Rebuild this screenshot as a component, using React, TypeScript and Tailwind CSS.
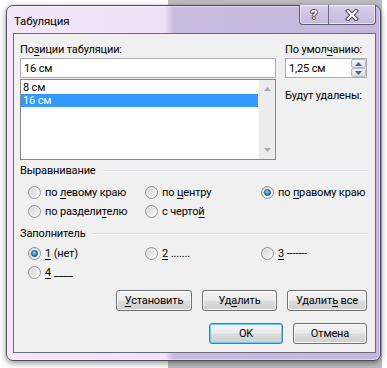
import React from "react";

const U = ({ children }: { children: React.ReactNode }) => (
  <span className="underline decoration-1 underline-offset-[2px]">{children}</span>
);

function Radio({ checked }: { checked?: boolean }) {
  return (
    <svg width="13" height="13" viewBox="0 0 13 13" className="shrink-0">
      <defs>
        <linearGradient id="rgrad" x1="0" y1="0" x2="1" y2="1">
          <stop offset="0" stopColor="#cfcfcf" />
          <stop offset="1" stopColor="#fcfcfc" />
        </linearGradient>
        <radialGradient id="rdot" cx="0.45" cy="0.4" r="0.65">
          <stop offset="0" stopColor="#8ad8ff" />
          <stop offset="0.6" stopColor="#2f86c8" />
          <stop offset="1" stopColor="#16507f" />
        </radialGradient>
      </defs>
      <circle cx="6.5" cy="6.5" r="6" fill="url(#rgrad)" stroke="#8e8f8f" strokeWidth="1" />
      <circle cx="6.5" cy="6.5" r="4.6" fill="none" stroke="#ffffff" strokeOpacity="0.5" strokeWidth="0.8" />
      {checked && <circle cx="6.5" cy="6.5" r="3.1" fill="url(#rdot)" stroke="#1b4a74" strokeWidth="0.7" />}
    </svg>
  );
}

function RadioItem({ checked, children }: { checked?: boolean; children: React.ReactNode }) {
  return (
    <div className="flex h-[19px] items-center gap-[4px] whitespace-nowrap">
      <Radio checked={checked} />
      <span>{children}</span>
    </div>
  );
}

function Btn({ children, w, primary }: { children: React.ReactNode; w: string; primary?: boolean }) {
  return (
    <div
      className={
        "flex h-[21px] items-center justify-center whitespace-nowrap rounded-[3px] border bg-[linear-gradient(#f2f2f2_0%,#ebebeb_48%,#dddddd_52%,#cfcfcf_100%)] " +
        w +
        (primary
          ? " border-[#3c7fb1] shadow-[inset_0_0_0_1px_#68cdf7]"
          : " border-[#707070] shadow-[inset_0_0_0_1px_#fbfbfb]")
      }
    >
      <span>{children}</span>
    </div>
  );
}

function GroupHeader({ title }: { title: string }) {
  return (
    <div className="flex items-center pl-[6px] pr-[7px]">
      <span className="leading-[15px]">{title}</span>
      <div className="ml-[7px] h-[2px] flex-1 border-t border-[#d5dfe5] border-b-white" style={{ borderBottomWidth: 1 }} />
    </div>
  );
}

export default function App() {
  return (
    <div className="h-[368px] w-[387px] overflow-hidden bg-[linear-gradient(to_right,#ffffff_168px,#bdbdc1_168px,#bdbdc1_382px,#ffffff_382px)] pl-[6px] pt-[5px] font-['Roboto',sans-serif] text-[11px] leading-[15px] tracking-[-0.15px] text-black">
      <div className="w-[375px] rounded-[7px] border border-[#4a4a5a] bg-[linear-gradient(to_right,#f3e6fa_0px,#efe1f7_158px,#c9bce0_166px,#c4b6dc_100%)] pb-[7px] pl-[6px] pr-[4px] shadow-[0_2px_6px_rgba(0,0,0,0.45),inset_0_0_0_1px_rgba(255,255,255,0.45)]">
        {/* title bar */}
        <div className="flex h-[27px] items-start">
          <span className="ml-[1px] mt-[8px] text-[11.5px] leading-[15px]">Табуляция</span>
          <div className="flex-1" />
          <div className="-mt-[1px] flex h-[20px] overflow-hidden rounded-b-[4px] border border-t-0 border-[#5d5b70] bg-[linear-gradient(#d9cfea,#c5b8dd)] shadow-[inset_0_0_0_1px_rgba(255,255,255,0.55)]">
            <div className="flex w-[29px] items-center justify-center border-r border-[#6d6a80]">
              <span className="text-[13px] font-bold leading-[14px] text-white [text-shadow:0_0_1px_#333,0_0_1px_#333,1px_0_0_#555,-1px_0_0_#555,0_1px_0_#555,0_-1px_0_#555]">
                ?
              </span>
            </div>
            <div className="flex w-[46px] items-center justify-center">
              <svg width="14" height="12" viewBox="0 0 14 12">
                <path d="M3 2 L11 10 M11 2 L3 10" stroke="#4b4b5b" strokeWidth="4.2" strokeLinecap="square" />
                <path d="M3 2 L11 10 M11 2 L3 10" stroke="#ffffff" strokeWidth="2.2" strokeLinecap="square" />
              </svg>
            </div>
          </div>
        </div>

        {/* client */}
        <div className="w-[363px] border border-[#6a6a7a] bg-[#f0f0f0] pb-[8px] pt-[8px]">
          <div className="flex gap-[9px] pl-[6px]">
            <div className="w-[256px]">
              <div className="leading-[15px]">
                По<U>з</U>иции табуляции:
              </div>
              <div className="mt-[1px] flex h-[20px] items-center border border-[#abadb3] bg-white pl-[3px]">16 см</div>
              <div className="mt-[1px] flex h-[81px] border border-[#828790] bg-white">
                <div className="flex-1 pt-[1px]">
                  <div className="flex h-[13px] items-center overflow-hidden pl-[2px] leading-[13px]">8 см</div>
                  <div className="flex h-[13px] items-center overflow-hidden bg-[#3399ff] pl-[2px] leading-[13px] text-white">16 см</div>
                </div>
                <div className="flex w-[17px] flex-col items-center justify-between border-l border-[#f6f6f6] bg-[#ececec] py-[7px]">
                  <svg width="7" height="4" viewBox="0 0 7 4">
                    <path d="M0 4 L3.5 0 L7 4 Z" fill="#a8a8a8" />
                  </svg>
                  <svg width="7" height="4" viewBox="0 0 7 4">
                    <path d="M0 0 L3.5 4 L7 0 Z" fill="#a8a8a8" />
                  </svg>
                </div>
              </div>
            </div>
            <div className="w-[82px]">
              <div className="whitespace-nowrap leading-[15px]">
                По умол<U>ч</U>анию:
              </div>
              <div className="mt-[1px] flex h-[20px] border border-[#abadb3] bg-white">
                <div className="flex flex-1 items-center pl-[3px]">1,25 см</div>
                <div className="flex w-[15px] flex-col">
                  <div className="flex flex-1 items-center justify-center rounded-[2px] border border-[#b3bcc6] bg-[linear-gradient(#f6f6f6,#dcdfe3)]">
                    <svg width="7" height="4" viewBox="0 0 7 4">
                      <path d="M0 4 L3.5 0 L7 4 Z" fill="#4f6380" />
                    </svg>
                  </div>
                  <div className="flex flex-1 items-center justify-center rounded-[2px] border border-[#b3bcc6] bg-[linear-gradient(#f6f6f6,#dcdfe3)]">
                    <svg width="7" height="4" viewBox="0 0 7 4">
                      <path d="M0 0 L3.5 4 L7 0 Z" fill="#4f6380" />
                    </svg>
                  </div>
                </div>
              </div>
              <div className="mt-[10px] whitespace-nowrap leading-[15px]">Будут удалены:</div>
            </div>
          </div>

          <div className="mt-[3px]">
            <GroupHeader title="Выравнивание" />
          </div>
          <div className="mt-[5px] grid grid-cols-[117px_116px_1fr] pl-[14px]">
            <RadioItem>
              по <U>л</U>евому краю
            </RadioItem>
            <RadioItem>
              по <U>ц</U>ентру
            </RadioItem>
            <RadioItem checked>
              по <U>п</U>равому краю
            </RadioItem>
            <RadioItem>
              по раздели<U>т</U>елю
            </RadioItem>
            <RadioItem>
              с черто<U>й</U>
            </RadioItem>
            <div />
          </div>

          <div className="mt-[5px]">
            <GroupHeader title="Заполнитель" />
          </div>
          <div className="mt-[3px] grid grid-cols-[117px_116px_1fr] pl-[14px]">
            <RadioItem checked>
              <U>1</U> (нет)
            </RadioItem>
            <RadioItem>
              <U>2</U> .......
            </RadioItem>
            <RadioItem>
              <U>3</U> -------
            </RadioItem>
            <RadioItem>
              <U>4</U> ____
            </RadioItem>
            <div />
            <div />
          </div>

          <div className="mt-[8px] flex justify-end gap-[10px] pr-[8px]">
            <Btn w="w-[76px]">
              <U>У</U>становить
            </Btn>
            <Btn w="w-[75px]">
              Уд<U>а</U>лить
            </Btn>
            <Btn w="w-[80px]">
              Удалит<U>ь</U> все
            </Btn>
          </div>
          <div className="mt-[12px] flex justify-end gap-[10px] pr-[8px]">
            <Btn w="w-[74px]" primary>
              OK
            </Btn>
            <Btn w="w-[74px]">Отмена</Btn>
          </div>
        </div>
      </div>
    </div>
  );
}
